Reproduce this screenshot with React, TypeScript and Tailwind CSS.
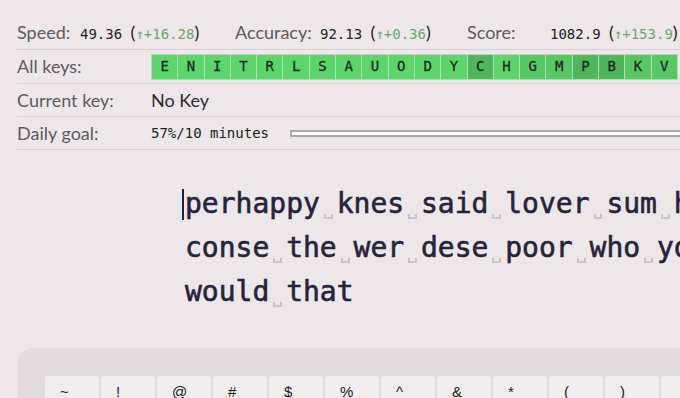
import React from 'react';

const mono = "font-['DejaVu_Sans_Mono',monospace]";
const sans = "font-['Lato','Noto_Sans',sans-serif]";

const letters: { ch: string; shade: 'hi' | 'mid' | 'lo' }[] = [
  { ch: 'E', shade: 'hi' },
  { ch: 'N', shade: 'hi' },
  { ch: 'I', shade: 'hi' },
  { ch: 'T', shade: 'hi' },
  { ch: 'R', shade: 'hi' },
  { ch: 'L', shade: 'hi' },
  { ch: 'S', shade: 'hi' },
  { ch: 'A', shade: 'hi' },
  { ch: 'U', shade: 'hi' },
  { ch: 'O', shade: 'hi' },
  { ch: 'D', shade: 'hi' },
  { ch: 'Y', shade: 'hi' },
  { ch: 'C', shade: 'lo' },
  { ch: 'H', shade: 'hi' },
  { ch: 'G', shade: 'mid' },
  { ch: 'M', shade: 'mid' },
  { ch: 'P', shade: 'lo' },
  { ch: 'B', shade: 'lo' },
  { ch: 'K', shade: 'mid' },
  { ch: 'V', shade: 'mid' },
];

const shadeClass = {
  hi: 'bg-[#5ed46c]',
  mid: 'bg-[#58c766]',
  lo: 'bg-[#50b65d]',
};

const lines = [
  ['perhappy', 'knes', 'said', 'lover', 'sum', 'h'],
  ['conse', 'the', 'wer', 'dese', 'poor', 'who', 'yo'],
  ['would', 'that'],
];

const keys = ['~', '!', '@', '#', '$', '%', '^', '&', '*', '(', ')'];

function Space() {
  return (
    <span className="relative inline-block w-[1ch]">
      <span className="absolute left-[4px] right-[4px] bottom-[7px] h-[5px] border-x-2 border-b-2 border-[#c9c3cb]" />
      {'\u00a0'}
    </span>
  );
}

function Stat({ label, labelW, value, delta, groupW }: { label: string; labelW: string; value: string; delta: string; groupW: string }) {
  return (
    <div className={`flex shrink-0 items-center ${groupW}`}>
      <span className={`shrink-0 ${labelW}`}>{label}</span>
      <span className="text-[#222]">
        <span className={`text-[14px] ${mono}`}>{value} </span>
        (<span className={`text-[14px] text-[#6aa66f] ${mono}`}>↑+{delta}</span>)
      </span>
    </div>
  );
}

export default function App() {
  return (
    <div className={`h-[398px] w-[680px] overflow-hidden bg-[#ede7e9] ${sans}`}>
      <div className="pl-[17px] pt-[16px]">
        <div className="flex h-[34px] items-center border-b border-[#d6d0d3] text-[18px] text-[#5e5a5f] whitespace-nowrap">
          <Stat label="Speed:" labelW="w-[63px]" value="49.36" delta="16.28" groupW="w-[218px]" />
          <Stat label="Accuracy:" labelW="w-[85px]" value="92.13" delta="0.36" groupW="w-[232px]" />
          <Stat label="Score:" labelW="w-[83px]" value="1082.9" delta="153.9" groupW="w-[213px]" />
        </div>
        <div className="flex h-[34px] items-center border-b border-[#d6d0d3]">
          <span className="w-[134px] shrink-0 text-[18px] text-[#5e5a5f]">All keys:</span>
          <div className="flex gap-[1px] bg-[#a8e2ae] p-[1px]">
            {letters.map((l) => (
              <div
                key={l.ch}
                className={`flex h-[24px] w-[25.3px] shrink-0 items-center justify-center text-[14px] text-[#1c2a1d] [-webkit-text-stroke:0.3px_#1c2a1d] ${mono} ${shadeClass[l.shade]}`}
              >
                {l.ch}
              </div>
            ))}
          </div>
        </div>
        <div className="flex h-[33px] items-center border-b border-[#d6d0d3]">
          <span className="w-[134px] shrink-0 text-[18px] text-[#5e5a5f]">Current key:</span>
          <span className="text-[18px] text-[#2d2b30]">No Key</span>
        </div>
        <div className="flex h-[33px] items-center border-b border-[#d6d0d3]">
          <span className="w-[134px] shrink-0 text-[18px] text-[#5e5a5f]">Daily goal:</span>
          <span className={`text-[14px] text-[#222] ${mono}`}>57%/10 minutes</span>
          <div className="ml-[21px] h-[7px] flex-1 border-y-2 border-l-2 border-[#a9a7a8] bg-white" />
        </div>
      </div>

      <div className={`mt-[32px] pl-[182px] text-[28px] leading-[44px] text-[#26243c] whitespace-nowrap [-webkit-text-stroke:0.6px_#26243c] ${mono}`}>
        {lines.map((words, i) => (
          <div key={i} className="flex">
            {i === 0 && <span className="mt-[7px] mr-[1px] h-[31px] w-[2px] shrink-0 bg-[#26243c]" />}
            <span className={i === 0 ? '' : 'ml-[3px]'}>
              {words.map((w, j) => (
                <React.Fragment key={j}>
                  {j > 0 && <Space />}
                  {w}
                </React.Fragment>
              ))}
            </span>
          </div>
        ))}
      </div>

      <div className="ml-[18px] mt-[34px] h-[80px] rounded-tl-[14px] bg-[#e3dcde] pl-[27px] pt-[28px]">
        <div className="flex gap-[2px]">
          {keys.map((k) => (
            <div
              key={k}
              className="h-[40px] w-[54px] shrink-0 rounded-[3px] bg-[#f1edee] pl-[15px] pt-[5px] text-[15px] text-[#222] font-['Liberation_Sans',sans-serif]"
            >
              {k}
            </div>
          ))}
          <div className="h-[40px] w-[54px] shrink-0 rounded-[3px] bg-[#f1edee]" />
        </div>
      </div>
    </div>
  );
}
